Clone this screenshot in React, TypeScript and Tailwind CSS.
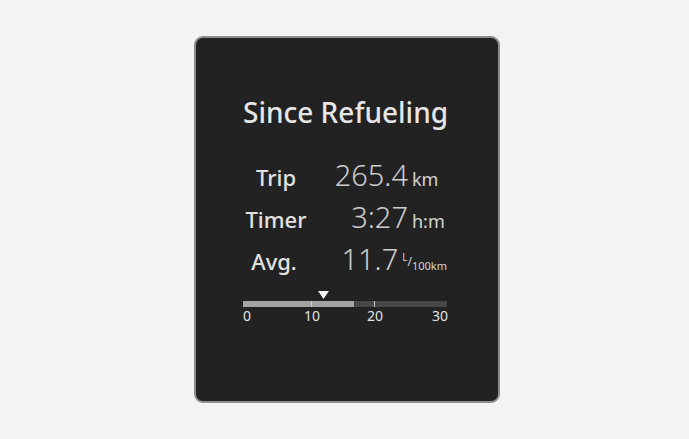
const rows = [
  { label: "Trip", value: "265.4", unit: "km" },
  { label: "Timer", value: "3:27", unit: "h:m" },
];

function Scale() {
  return (
    <div className="mt-[12px] w-[204px]">
      <div className="relative h-[8px]">
        <svg className="absolute left-[75px] top-0" width="11" height="8" viewBox="0 0 11 8">
          <polygon points="0,0 11,0 5.5,8" fill="#f2f2f2" />
        </svg>
      </div>
      <div className="relative mt-[2px] flex h-[6px] w-[204px]">
        <div className="h-full w-[111px] bg-[#a3a3a3]" />
        <div className="h-full flex-1 bg-[#474747]" />
        <div className="absolute left-[68px] top-0 h-full w-[1px] bg-[#d0d0d0]" />
        <div className="absolute left-[131px] top-0 h-full w-[1px] bg-[#c8c8c8]" />
      </div>
      <div className="relative mt-[1px] h-[16px] text-[14px] leading-[16px] text-[#e4e4e4]">
        <span className="absolute left-0">0</span>
        <span className="absolute left-[61px]">10</span>
        <span className="absolute left-[124px]">20</span>
        <span className="absolute right-[-1px]">30</span>
      </div>
    </div>
  );
}

export default function App() {
  return (
    <div
      className="flex h-[439px] w-[689px] items-center justify-center bg-[#f4f3f1] pl-[5px]"
      style={{ fontFamily: '"Noto Sans", "Open Sans", sans-serif' }}
    >
      <div className="h-[367px] w-[306px] rounded-[9px] border-2 border-[#8c8c8c] bg-[#222222] pl-[47px] pr-[51px] pt-[56px]">
        <h1 className="w-[204px] whitespace-nowrap text-center text-[28px] font-medium leading-[36px] text-[#e6e6e6]">
          Since Refueling
        </h1>
        <div className="mt-[23px] flex flex-col">
          {rows.map((r) => (
            <div key={r.label} className="flex h-[42px] items-baseline">
              <span className="w-[66px] text-center text-[22px] font-medium text-[#e2e2e2]">{r.label}</span>
              <span className="w-[99px] text-right text-[29px] font-light text-[#cdcdcd]">{r.value}</span>
              <span className="pl-[4px] text-[18px] text-[#d4d4d4]">{r.unit}</span>
            </div>
          ))}
          <div className="flex h-[42px] items-baseline">
            <span className="w-[66px] text-center text-[22px] font-medium text-[#e2e2e2]">Avg.</span>
            <span className="w-[99px] text-right text-[29px] font-light text-[#cdcdcd]">11.7</span>
            <span className="pl-[4px] text-[12px] text-[#d4d4d4]">
              <span className="relative top-[-9px] text-[10px]">L</span>
              <span className="relative top-[-4px]">/</span>
              <span className="text-[11px]">100km</span>
            </span>
          </div>
        </div>
        <Scale />
      </div>
    </div>
  );
}
